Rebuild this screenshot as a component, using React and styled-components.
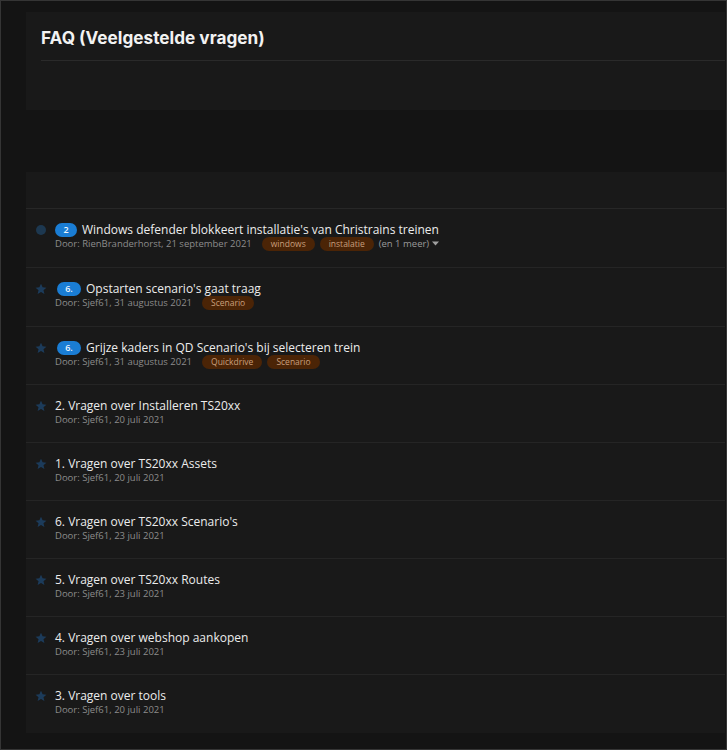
import React from 'react';
import styled, { createGlobalStyle } from 'styled-components';

const GlobalStyle = createGlobalStyle`
  html, body {
    margin: 0;
    padding: 0;
    background: #141414;
  }
  * {
    box-sizing: border-box;
  }
`;

const topics = [
  {
    icon: 'dot',
    badge: '2',
    title: "Windows defender blokkeert installatie's van Christrains treinen",
    author: 'RienBranderhorst',
    date: '21 september 2021',
    tags: ['windows', 'instalatie'],
    more: '(en 1 meer)',
  },
  {
    badge: '6.',
    title: "Opstarten scenario's gaat traag",
    author: 'Sjef61',
    date: '31 augustus 2021',
    tags: ['Scenario'],
  },
  {
    badge: '6.',
    title: "Grijze kaders in QD Scenario's bij selecteren trein",
    author: 'Sjef61',
    date: '31 augustus 2021',
    tags: ['Quickdrive', 'Scenario'],
  },
  { title: '2. Vragen over Installeren TS20xx', author: 'Sjef61', date: '20 juli 2021' },
  { title: '1. Vragen over TS20xx Assets', author: 'Sjef61', date: '20 juli 2021' },
  { title: "6. Vragen over TS20xx Scenario's", author: 'Sjef61', date: '23 juli 2021' },
  { title: '5. Vragen over TS20xx Routes', author: 'Sjef61', date: '23 juli 2021' },
  { title: '4. Vragen over webshop aankopen', author: 'Sjef61', date: '23 juli 2021' },
  { title: '3. Vragen over tools', author: 'Sjef61', date: '20 juli 2021' },
];

const Star = () => (
  <svg width="12" height="12" viewBox="0 0 24 24">
    <path
      fill="#1c3b5a"
      d="M12 1.5l3.2 7.1 7.6.7-5.8 5.1 1.8 7.6L12 18l-6.8 4 1.8-7.6-5.8-5.1 7.6-.7z"
    />
  </svg>
);

const Caret = () => (
  <svg width="7" height="5" viewBox="0 0 10 6">
    <path fill="#a0a0a0" d="M0 0h10L5 6z" />
  </svg>
);

const TopicRow = ({ topic }) => (
  <Row>
    <IconCell>{topic.icon === 'dot' ? <Dot /> : <Star />}</IconCell>
    <Body>
      <TitleLine>
        {topic.badge && <Badge $wide={topic.badge.length > 1}>{topic.badge}</Badge>}
        <Title>{topic.title}</Title>
      </TitleLine>
      <Meta>
        <span>
          Door: {topic.author}, {topic.date}
        </span>
        {topic.tags && (
          <Tags>
            {topic.tags.map((t) => (
              <Tag key={t}>{t}</Tag>
            ))}
            {topic.more && (
              <More>
                {topic.more} <Caret />
              </More>
            )}
          </Tags>
        )}
      </Meta>
    </Body>
  </Row>
);

const App = () => (
  <Frame>
    <GlobalStyle />
    <HeaderPanel>
      <PageTitle>FAQ (Veelgestelde vragen)</PageTitle>
      <HeaderRule />
    </HeaderPanel>
    <ListPanel>
      <ListHead />
      {topics.map((t) => (
        <TopicRow key={t.title} topic={t} />
      ))}
    </ListPanel>
  </Frame>
);

const Frame = styled.div`
  width: 727px;
  height: 750px;
  border: 1px solid #353535;
  background: #141414;
  padding: 11px 1px 0 25px;
  display: flex;
  flex-direction: column;
  overflow: hidden;
`;

const HeaderPanel = styled.div`
  background: #191919;
  height: 98px;
  padding: 13px 0 0 15px;
  display: flex;
  flex-direction: column;
`;

const PageTitle = styled.h1`
  margin: 0;
  font-family: Inter, 'Liberation Sans', sans-serif;
  font-weight: 700;
  font-size: 17.2px;
  line-height: 26px;
  color: #f2f2f2;
`;

const HeaderRule = styled.div`
  margin-top: 9px;
  height: 1px;
  background: #2a2a2a;
`;

const ListPanel = styled.div`
  margin-top: 62px;
  background: #191919;
  display: flex;
  flex-direction: column;
`;

const ListHead = styled.div`
  height: 37px;
  border-bottom: 1px solid #272727;
`;

const Row = styled.div`
  height: 58px;
  display: flex;
  align-items: flex-start;
  padding: 14px 15px 0 9px;
  border-bottom: 1px solid #252525;

  &:nth-child(2),
  &:nth-child(3) {
    height: 59px;
  }

  &:last-child {
    border-bottom: none;
  }
`;

const IconCell = styled.div`
  width: 20px;
  height: 14px;
  display: flex;
  align-items: center;
  flex-shrink: 0;
`;

const Dot = styled.span`
  width: 10px;
  height: 10px;
  margin-left: 1px;
  border-radius: 50%;
  background: #1d3850;
`;

const Body = styled.div`
  display: flex;
  flex-direction: column;
  min-width: 0;
`;

const TitleLine = styled.div`
  display: flex;
  align-items: center;
  gap: 5px;
  height: 14px;
`;

const Badge = styled.span`
  min-width: ${(p) => (p.$wide ? '24px' : '22px')};
  margin-left: ${(p) => (p.$wide ? '2px' : '0')};
  height: 14px;
  padding: 0 6px;
  border-radius: 7px;
  background: #1a7dd4;
  color: #f0f6fc;
  font-family: 'Open Sans', 'Noto Sans', sans-serif;
  font-size: 9px;
  font-weight: 600;
  line-height: 14px;
  text-align: center;
`;

const Title = styled.span`
  font-family: 'Open Sans', 'Noto Sans', sans-serif;
  font-size: 12px;
  line-height: 14px;
  color: #ececec;
  white-space: nowrap;
`;

const Meta = styled.div`
  display: flex;
  align-items: center;
  gap: 10px;
  height: 13px;
  font-family: 'Open Sans', 'Noto Sans', sans-serif;
  font-size: 9.5px;
  color: #8c8c8c;
  white-space: nowrap;
`;

const Tags = styled.div`
  display: flex;
  align-items: center;
  gap: 5px;
`;

const Tag = styled.span`
  height: 14px;
  padding: 0 9px;
  border-radius: 7px;
  background: #4b2406;
  color: #c99f7c;
  font-size: 8.5px;
  line-height: 14px;
`;

const More = styled.span`
  display: flex;
  align-items: center;
  gap: 3px;
  color: #9a9a9a;
  font-size: 9.5px;
`;

export default App;
